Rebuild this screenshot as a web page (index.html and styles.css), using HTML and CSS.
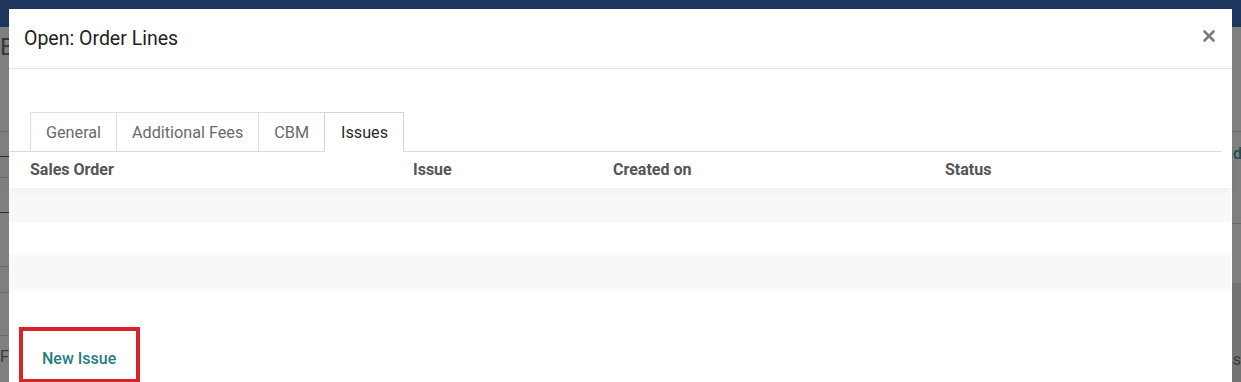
FILE: index.html
```html
<!DOCTYPE html>
<html lang="en">
<head>
    <meta charset="UTF-8">
    <meta name="viewport" content="width=device-width, initial-scale=1.0">
    <title>Open: Order Lines</title>
    <link rel="stylesheet" href="styles.css">
</head>
<body>
    <!-- page behind the dialog (already dimmed by the backdrop) -->
    <div class="page">
        <div class="navbar"></div>
        <div class="page-body">
            <div class="page-col">
                <div class="page-title">E</div>
                <div class="sheet-row row-a"></div>
                <div class="sheet-row dark row-b"></div>
                <div class="sheet-row row-c"></div>
                <div class="sheet-row dark row-d"></div>
                <div class="sheet-row row-e"></div>
                <div class="sheet-row row-f"></div>
                <div class="sheet-row row-g"><span class="sheet-text">F</span></div>
            </div>
            <div class="page-col right">
                <div class="page-title"></div>
                <div class="sheet-row row-h"><span class="sheet-link">Add</span></div>
                <div class="sheet-row row-i"></div>
                <div class="sheet-row shaded row-j"><span class="sheet-text">Us</span></div>
            </div>
        </div>
    </div>

    <div class="modal">
        <div class="modal-header">
            <h4 class="modal-title">Open: Order Lines</h4>
            <button class="modal-close" aria-label="Close">
                <svg width="12" height="12" viewBox="0 0 12 12">
                    <path d="M1.5 1.5 L10.5 10.5 M10.5 1.5 L1.5 10.5" stroke="#7b7b7b" stroke-width="2.6" stroke-linecap="round"/>
                </svg>
            </button>
        </div>
        <div class="modal-body">
            <ul class="nav-tabs">
                <li class="tab">General</li>
                <li class="tab">Additional Fees</li>
                <li class="tab">CBM</li>
                <li class="tab active">Issues</li>
            </ul>

            <div class="list">
                <div class="list-head">
                    <span>Sales Order</span>
                    <span>Issue</span>
                    <span>Created on</span>
                    <span>Status</span>
                </div>
                <div class="list-row"></div>
                <div class="list-row"></div>
                <div class="list-row"></div>
            </div>

            <div class="add-line">
                <div class="highlight">
                    <a class="add-link" href="#">New Issue</a>
                </div>
            </div>
        </div>
    </div>
</body>
</html>
```

FILE: styles.css
```css
* {
    box-sizing: border-box;
}

body {
    margin: 0;
    height: 382px;
    overflow: hidden;
    position: relative;
    background: #7f7f7f;
    font-family: Roboto, "Liberation Sans", sans-serif;
}

/* background page */
.navbar {
    height: 27px;
    background: #1e355e;
}

.page-body {
    display: flex;
    justify-content: space-between;
}

.page-col {
    width: 60px;
    display: flex;
    flex-direction: column;
}

.page-col.right {
    text-align: right;
}

.page-title {
    height: 104px;
    padding-top: 8px;
    font-size: 24px;
    line-height: 24px;
    color: #2e3a3b;
}

.sheet-row {
    border-top: 1px solid #6b6b6b;
}

.sheet-row.dark {
    border-top-color: #2b2b2b;
}

.sheet-row.shaded {
    background: #747474;
    border-top: none;
    flex: 1;
}

.row-a { height: 25px; }
.row-b { height: 21px; }
.row-c { height: 35px; }
.row-d { height: 54px; }
.row-e { height: 26px; }
.row-f { height: 43px; }
.row-g { height: 60px; padding-top: 11px; }
.row-h { height: 92px; padding-top: 12px; }
.row-i { height: 60px; }
.row-j { padding-top: 67px; }

.sheet-text {
    font-size: 16px;
    color: #3a3a3a;
}

.sheet-link {
    font-size: 16px;
    font-weight: 500;
    color: #1d4f51;
    margin-right: -1px;
}

/* dialog */
.modal {
    position: absolute;
    top: 9px;
    left: 9px;
    width: 1223px;
    height: 400px;
    background: #fff;
}

.modal-header {
    height: 60px;
    display: flex;
    align-items: center;
    justify-content: space-between;
    padding: 0 17px 0 15px;
    border-bottom: 1px solid #e6e6e6;
}

.modal-title {
    margin: 0;
    font-size: 19.5px;
    font-weight: 400;
    color: #222;
}

.modal-close {
    border: none;
    background: none;
    padding: 0;
    margin-top: -5px;
    display: flex;
}

.modal-body {
    padding-top: 43px;
}

.nav-tabs {
    list-style: none;
    margin: 0 10px 0 0;
    padding: 0 0 0 21px;
    display: flex;
    border-bottom: 1px solid #dcdcdc;
}

.tab {
    height: 40px;
    margin-bottom: -1px;
    margin-right: -1px;
    padding: 0 15px;
    display: flex;
    align-items: center;
    font-size: 16.2px;
    color: #6a6a6a;
    border: 1px solid #dedede;
    border-bottom-color: #dcdcdc;
}

.tab.active {
    color: #2b2b2b;
    border-color: #cfd4d8;
    border-bottom-color: #fff;
    padding: 0 15px 0 16px;
}

.list-head {
    height: 36px;
    display: grid;
    grid-template-columns: 383px 200px 332px 1fr;
    align-items: center;
    padding: 0 0 2px 21px;
    font-size: 16px;
    font-weight: 700;
    color: #555;
    box-shadow: 0 3px 6px rgba(0, 0, 0, 0.04);
    position: relative;
}

.list-row {
    height: 33.5px;
    margin-right: 1px;
}

.list-row:nth-child(even) {
    background: #f8f8f8;
}

.add-line {
    padding: 38px 0 0 10px;
}

.highlight {
    display: inline-block;
    border: 4px solid #d8232b;
    padding: 18px 20px 11px 19px;
}

.add-link {
    font-size: 16px;
    font-weight: 500;
    color: #1f7f80;
    text-decoration: none;
}
```
